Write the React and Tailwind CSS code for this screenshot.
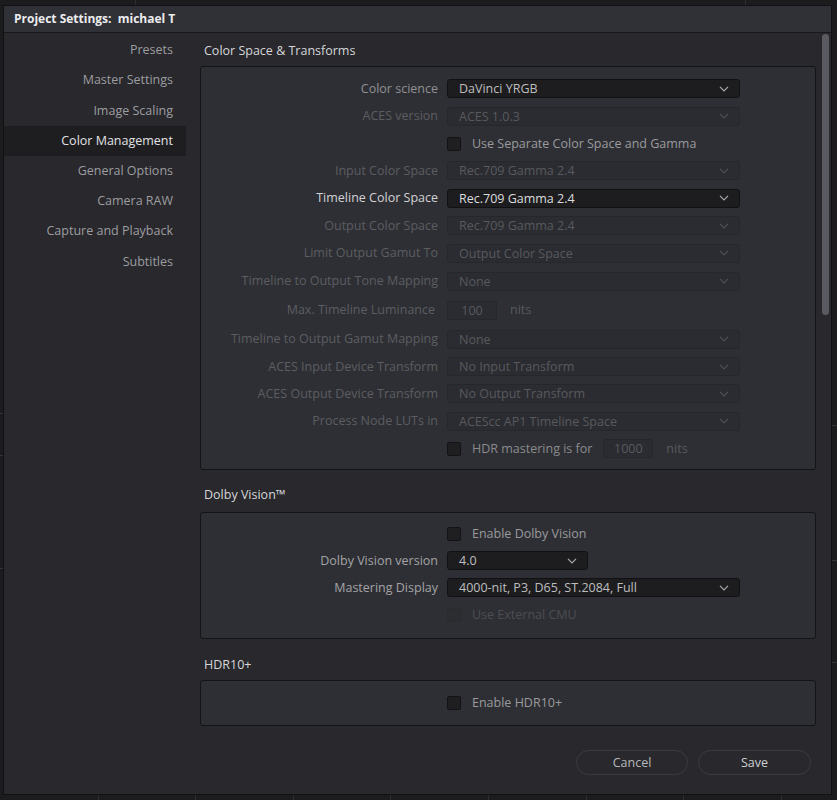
import React from 'react';

const FONT = { fontFamily: '"Open Sans", "Noto Sans", "Liberation Sans", sans-serif' };

// sidebar entries with their row heights
const NAV = [
  ['Presets', 'h-[30px]'],
  ['Master Settings', 'h-[30px]'],
  ['Image Scaling', 'h-[31px]'],
  ['Color Management', 'h-[30px]'],
  ['General Options', 'h-[30px]'],
  ['Camera RAW', 'h-[30px]'],
  ['Capture and Playback', 'h-[30px]'],
  ['Subtitles', 'h-[31px]'],
];

function Chevron({ dim }) {
  return (
    <svg width="10" height="6" viewBox="0 0 10 6" className="shrink-0">
      <path
        d="M1 0.8l4 4 4-4"
        fill="none"
        stroke={dim ? '#4f5055' : '#a9a9ad'}
        strokeWidth="1.2"
      />
    </svg>
  );
}

function Select({ value, disabled, bright, short }) {
  return (
    <div
      className={
        'flex h-[19px] items-center justify-between rounded-[3px] border pl-[11px] pr-[10px] text-[12.5px] leading-[17px] ' +
        (short ? 'w-[141px] ' : 'w-[293px] ') +
        (disabled
          ? 'border-[#26272b] bg-[#2b2c31] text-[#58595d]'
          : 'border-[#111113] bg-[#1d1d20] ' + (bright ? 'text-[#dcdcdc]' : 'text-[#bdbdbf]'))
      }
    >
      <span>{value}</span>
      <Chevron dim={disabled} />
    </div>
  );
}

function Checkbox({ label, disabled, dimLabel }) {
  return (
    <div className="flex items-center">
      <div
        className={
          'h-[14px] w-[14px] rounded-[2px] border ' +
          (disabled ? 'border-[#2a2b2f] bg-[#2c2d31]' : 'border-[#131315] bg-[#1f1f22]')
        }
      />
      <span
        className={
          'ml-[11px] text-[12.5px] leading-[18px] ' +
          (disabled ? 'text-[#4c4d51]' : dimLabel ? 'text-[#8a8a8d]' : 'text-[#9a9a9d]')
        }
      >
        {label}
      </span>
    </div>
  );
}

function NumberBox({ value }) {
  return (
    <div className="flex h-[19px] w-[50px] items-center justify-center rounded-[2px] border border-[#26272b] bg-[#2b2c31] text-[12.5px] leading-[17px] text-[#58595d]">
      {value}
    </div>
  );
}

function Row({ h, label, tone = 'dim', children, labelPad }) {
  const color =
    tone === 'bright' ? 'text-[#d2d2d4]' : tone === 'normal' ? 'text-[#a3a3a6]' : tone === 'mid' ? 'text-[#909093]' : 'text-[#5c5d61]';
  return (
    <div className={'flex items-center ' + h}>
      <div className={'w-[237px] shrink-0 text-right text-[12.5px] leading-[18px] ' + color + (labelPad ? ' pr-[3px]' : '')}>
        {label}
      </div>
      <div className="ml-[9px] flex items-center">{children}</div>
    </div>
  );
}

function SectionTitle({ children, className }) {
  return (
    <div className={'h-[18px] pl-[4px] text-[12.5px] leading-[18px] text-[#d6d6d8] ' + className}>{children}</div>
  );
}

function Group({ children, className }) {
  return (
    <div className={'w-[616px] rounded-[3px] border border-[#141416] bg-[#2e2f34] ' + className}>{children}</div>
  );
}

export default function App() {
  return (
    <div className="relative h-[800px] w-[837px] overflow-hidden bg-[#1c1c1f]" style={FONT}>
      {/* app behind the dialog */}
      <div className="absolute left-[135px] top-0 h-[5px] w-px bg-[#2e2e32]" />
      <div className="absolute left-[745px] top-0 h-[5px] w-px bg-[#2e2e32]" />
      {[98, 195, 293, 390, 488, 586, 683, 781].map((x) => (
        <div key={x} className="absolute bottom-0 h-[5px] w-px bg-[#2e2e32]" style={{ left: x }} />
      ))}
      {[425, 560, 662].map((y) => (
        <div key={y} className="absolute right-0 h-px w-[5px] bg-[#34343a]" style={{ top: y }} />
      ))}
      {[413, 455, 568].map((y) => (
        <div key={y} className="absolute left-0 h-px w-[3px] bg-[#34343a]" style={{ top: y }} />
      ))}

      <div className="absolute left-[3px] top-[5px] flex h-[790px] w-[829px] flex-col border border-[#111113] bg-[#28282d]">
        <div className="flex h-[27px] shrink-0 items-center border-b border-[#19191b] bg-[#303136] pl-[10px] text-[12px] font-bold leading-[18px] text-[#ececee]">
          Project Settings:&nbsp; michael T
        </div>

        <div className="flex min-h-0 flex-1">
          <div className="w-[182px] shrink-0 pt-[2px]">
            {NAV.map(([item, h]) => {
              const active = item === 'Color Management';
              return (
                <div
                  key={item}
                  className={
                    'flex items-center justify-end pr-[13px] text-[12.5px] leading-[18px] ' +
                    h +
                    (active ? ' bg-[#1e1e21] text-[#e2e2e4]' : ' text-[#9d9da0]')
                  }
                >
                  {item}
                </div>
              );
            })}
          </div>

          <div className="w-[632px] shrink-0 pl-[14px]">
            <SectionTitle className="mt-[9px] mb-[6px]">Color Space &amp; Transforms</SectionTitle>
            <Group className="pt-[8px] pb-[7px]">
              <Row h="h-[27px]" label="Color science" tone="mid">
                <Select value="DaVinci YRGB" />
              </Row>
              <Row h="h-[28px]" label="ACES version">
                <Select value="ACES 1.0.3" disabled />
              </Row>
              <Row h="h-[27px]" label="">
                <Checkbox label="Use Separate Color Space and Gamma" />
              </Row>
              <Row h="h-[27px]" label="Input Color Space">
                <Select value="Rec.709 Gamma 2.4" disabled />
              </Row>
              <Row h="h-[28px]" label="Timeline Color Space" tone="bright">
                <Select value="Rec.709 Gamma 2.4" bright />
              </Row>
              <Row h="h-[27px]" label="Output Color Space">
                <Select value="Rec.709 Gamma 2.4" disabled />
              </Row>
              <Row h="h-[28px]" label="Limit Output Gamut To">
                <Select value="Output Color Space" disabled />
              </Row>
              <Row h="h-[28px]" label="Timeline to Output Tone Mapping">
                <Select value="None" disabled />
              </Row>
              <Row h="h-[30px]" label="Max. Timeline Luminance" labelPad>
                <NumberBox value="100" />
                <span className="ml-[13px] text-[12.5px] leading-[18px] text-[#58595d]">nits</span>
              </Row>
              <Row h="h-[28px]" label="Timeline to Output Gamut Mapping">
                <Select value="None" disabled />
              </Row>
              <Row h="h-[27px]" label="ACES Input Device Transform">
                <Select value="No Input Transform" disabled />
              </Row>
              <Row h="h-[27px]" label="ACES Output Device Transform">
                <Select value="No Output Transform" disabled />
              </Row>
              <Row h="h-[28px]" label="Process Node LUTs in">
                <Select value="ACEScc AP1 Timeline Space" disabled />
              </Row>
              <Row h="h-[27px]" label="">
                <Checkbox label="HDR mastering is for" dimLabel />
                <div className="ml-[11px]">
                  <NumberBox value="1000" />
                </div>
                <span className="ml-[13px] text-[12.5px] leading-[18px] text-[#58595d]">nits</span>
              </Row>
            </Group>

            <SectionTitle className="mt-[16px] mb-[8px]">Dolby Vision™</SectionTitle>
            <Group className="pt-[7px] pb-[10px]">
              <Row h="h-[27px]" label="">
                <Checkbox label="Enable Dolby Vision" />
              </Row>
              <Row h="h-[27px]" label="Dolby Vision version" tone="normal">
                <Select value="4.0" short />
              </Row>
              <Row h="h-[27px]" label="Mastering Display" tone="normal">
                <Select value="4000-nit, P3, D65, ST.2084, Full" />
              </Row>
              <Row h="h-[27px]" label="">
                <Checkbox label="Use External CMU" disabled />
              </Row>
            </Group>

            <SectionTitle className="mt-[17px] mb-[6px]">HDR10+</SectionTitle>
            <Group className="pt-[8px] pb-[9px]">
              <Row h="h-[27px]" label="">
                <Checkbox label="Enable HDR10+" />
              </Row>
            </Group>

            <div className="mt-[24px] flex w-[616px] justify-end gap-[10px] pr-[5px]">
              <button className="h-[25px] w-[112px] rounded-full border border-[#3b3c41] text-[12.5px] leading-[18px] text-[#b9b9bc]">
                Cancel
              </button>
              <button className="h-[25px] w-[113px] rounded-full border border-[#3b3c41] text-[12.5px] leading-[18px] text-[#cfcfd1]">
                Save
              </button>
            </div>
          </div>

          <div className="w-[12px] shrink-0 pl-[4px] pt-[1px]">
            <div className="h-[281px] w-[7px] rounded-full bg-[#5a5b60]" />
          </div>
        </div>
      </div>
    </div>
  );
}
